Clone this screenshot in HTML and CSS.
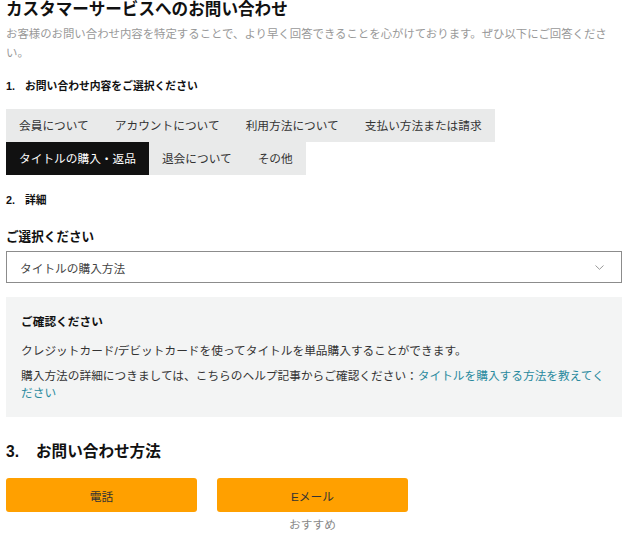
FILE: index.html
```html
<!DOCTYPE html>
<html lang="ja">

<head>
	<meta charset="UTF-8">
	<title>カスタマーサービスへのお問い合わせ</title>
	<link rel="stylesheet" href="styles.css">
</head>

<body>
	<div class="page">
		<h1>カスタマーサービスへのお問い合わせ</h1>
		<p class="lead">お客様のお問い合わせ内容を特定することで、より早く回答できることを心がけております。ぜひ以下にご回答ください。</p>

		<!-- 1. 種類 -->
		<h4 class="step"><span class="num">1.</span>お問い合わせ内容をご選択ください</h4>
		<ul class="tabs">
			<li>会員について</li>
			<li>アカウントについて</li>
			<li>利用方法について</li>
			<li>支払い方法または請求</li>
			<li class="active">タイトルの購入・返品</li>
			<li>退会について</li>
			<li>その他</li>
		</ul>

		<!-- 2. 詳細 -->
		<h4 class="step step2"><span class="num">2.</span>詳細</h4>
		<h5 class="label">ご選択ください</h5>
		<div class="select">
			<span>タイトルの購入方法</span>
			<svg width="9" height="5" viewBox="0 0 9 5"><path d="M0.5 0.5 L4.5 4.3 L8.5 0.5" fill="none" stroke="#999" stroke-width="1"/></svg>
		</div>

		<div class="notice">
			<h5>ご確認ください</h5>
			<p>クレジットカード/デビットカードを使ってタイトルを単品購入することができます。</p>
			<p>購入方法の詳細につきましては、こちらのヘルプ記事からご確認ください：<a href="#">タイトルを購入する方法を教えてください</a></p>
		</div>

		<!-- 3. 方法 -->
		<h3 class="method"><span class="num">3.</span>お問い合わせ方法</h3>
		<div class="buttons">
			<div class="col">
				<button type="button">電話</button>
			</div>
			<div class="col">
				<button type="button">Eメール</button>
				<p class="hint">おすすめ</p>
			</div>
		</div>
	</div>
</body>

</html>
```

FILE: styles.css
```css
body {
	margin: 0;
	padding: 0;
	background-color: #FFF;
	color: #222;
	font-family: "Liberation Sans", "Noto Sans CJK JP", sans-serif;
	font-size: 11.7px;
}

.page {
	width: 616px;
	padding-left: 6px;
}

h1 {
	margin: 0;
	font-size: 16.6px;
	line-height: 20px;
	color: #111;
}

.lead {
	margin: 5px 0 0;
	font-size: 11.4px;
	line-height: 18.5px;
	color: #999;
}

.step {
	margin: 16px 0 0;
	font-size: 10.8px;
	line-height: 16px;
	color: #111;
}

.step .num {
	display: inline-block;
	width: 19px;
}

.tabs {
	display: flex;
	flex-wrap: wrap;
	margin: 15px 0 0;
	padding: 0;
	list-style: none;
}

.tabs li {
	height: 33px;
	line-height: 33px;
	padding: 0 13px;
	background-color: #E9EAEA;
	color: #333;
}

.tabs li.active {
	background-color: #111;
	color: #FFF;
}

.step2 {
	margin-top: 17px;
}

.label {
	margin: 20px 0 0;
	font-size: 12.6px;
	line-height: 18px;
	color: #111;
}

.select {
	display: flex;
	align-items: center;
	justify-content: space-between;
	height: 32px;
	margin-top: 5px;
	padding: 0 17px 0 13px;
	box-sizing: border-box;
	border: 1px solid #8C8C8C;
	color: #444;
}

.select svg {
	display: block;
}

.notice {
	margin-top: 14px;
	padding: 16px 15px 16px;
	background-color: #F3F4F4;
	color: #333;
}

.notice h5 {
	margin: 0;
	font-size: 11.7px;
	line-height: 17px;
	color: #111;
}

.notice p {
	margin: 12px 0 0;
	line-height: 17px;
}

.notice p + p {
	margin-top: 8px;
}

.notice a {
	color: #2A8A9E;
	text-decoration: none;
}

.method {
	margin: 25px 0 0;
	font-size: 15.6px;
	line-height: 20px;
	color: #111;
}

.method .num {
	display: inline-block;
	width: 30px;
}

.buttons {
	display: flex;
	gap: 20px;
	margin-top: 16px;
}

.buttons .col {
	width: 191px;
}

.buttons button {
	display: block;
	width: 100%;
	height: 34px;
	border: none;
	border-radius: 3px;
	background-color: #FFA000;
	color: #333;
	font-family: inherit;
	font-size: 11.7px;
}

.hint {
	margin: 4px 0 0;
	text-align: center;
	color: #888;
	line-height: 17px;
}
```
